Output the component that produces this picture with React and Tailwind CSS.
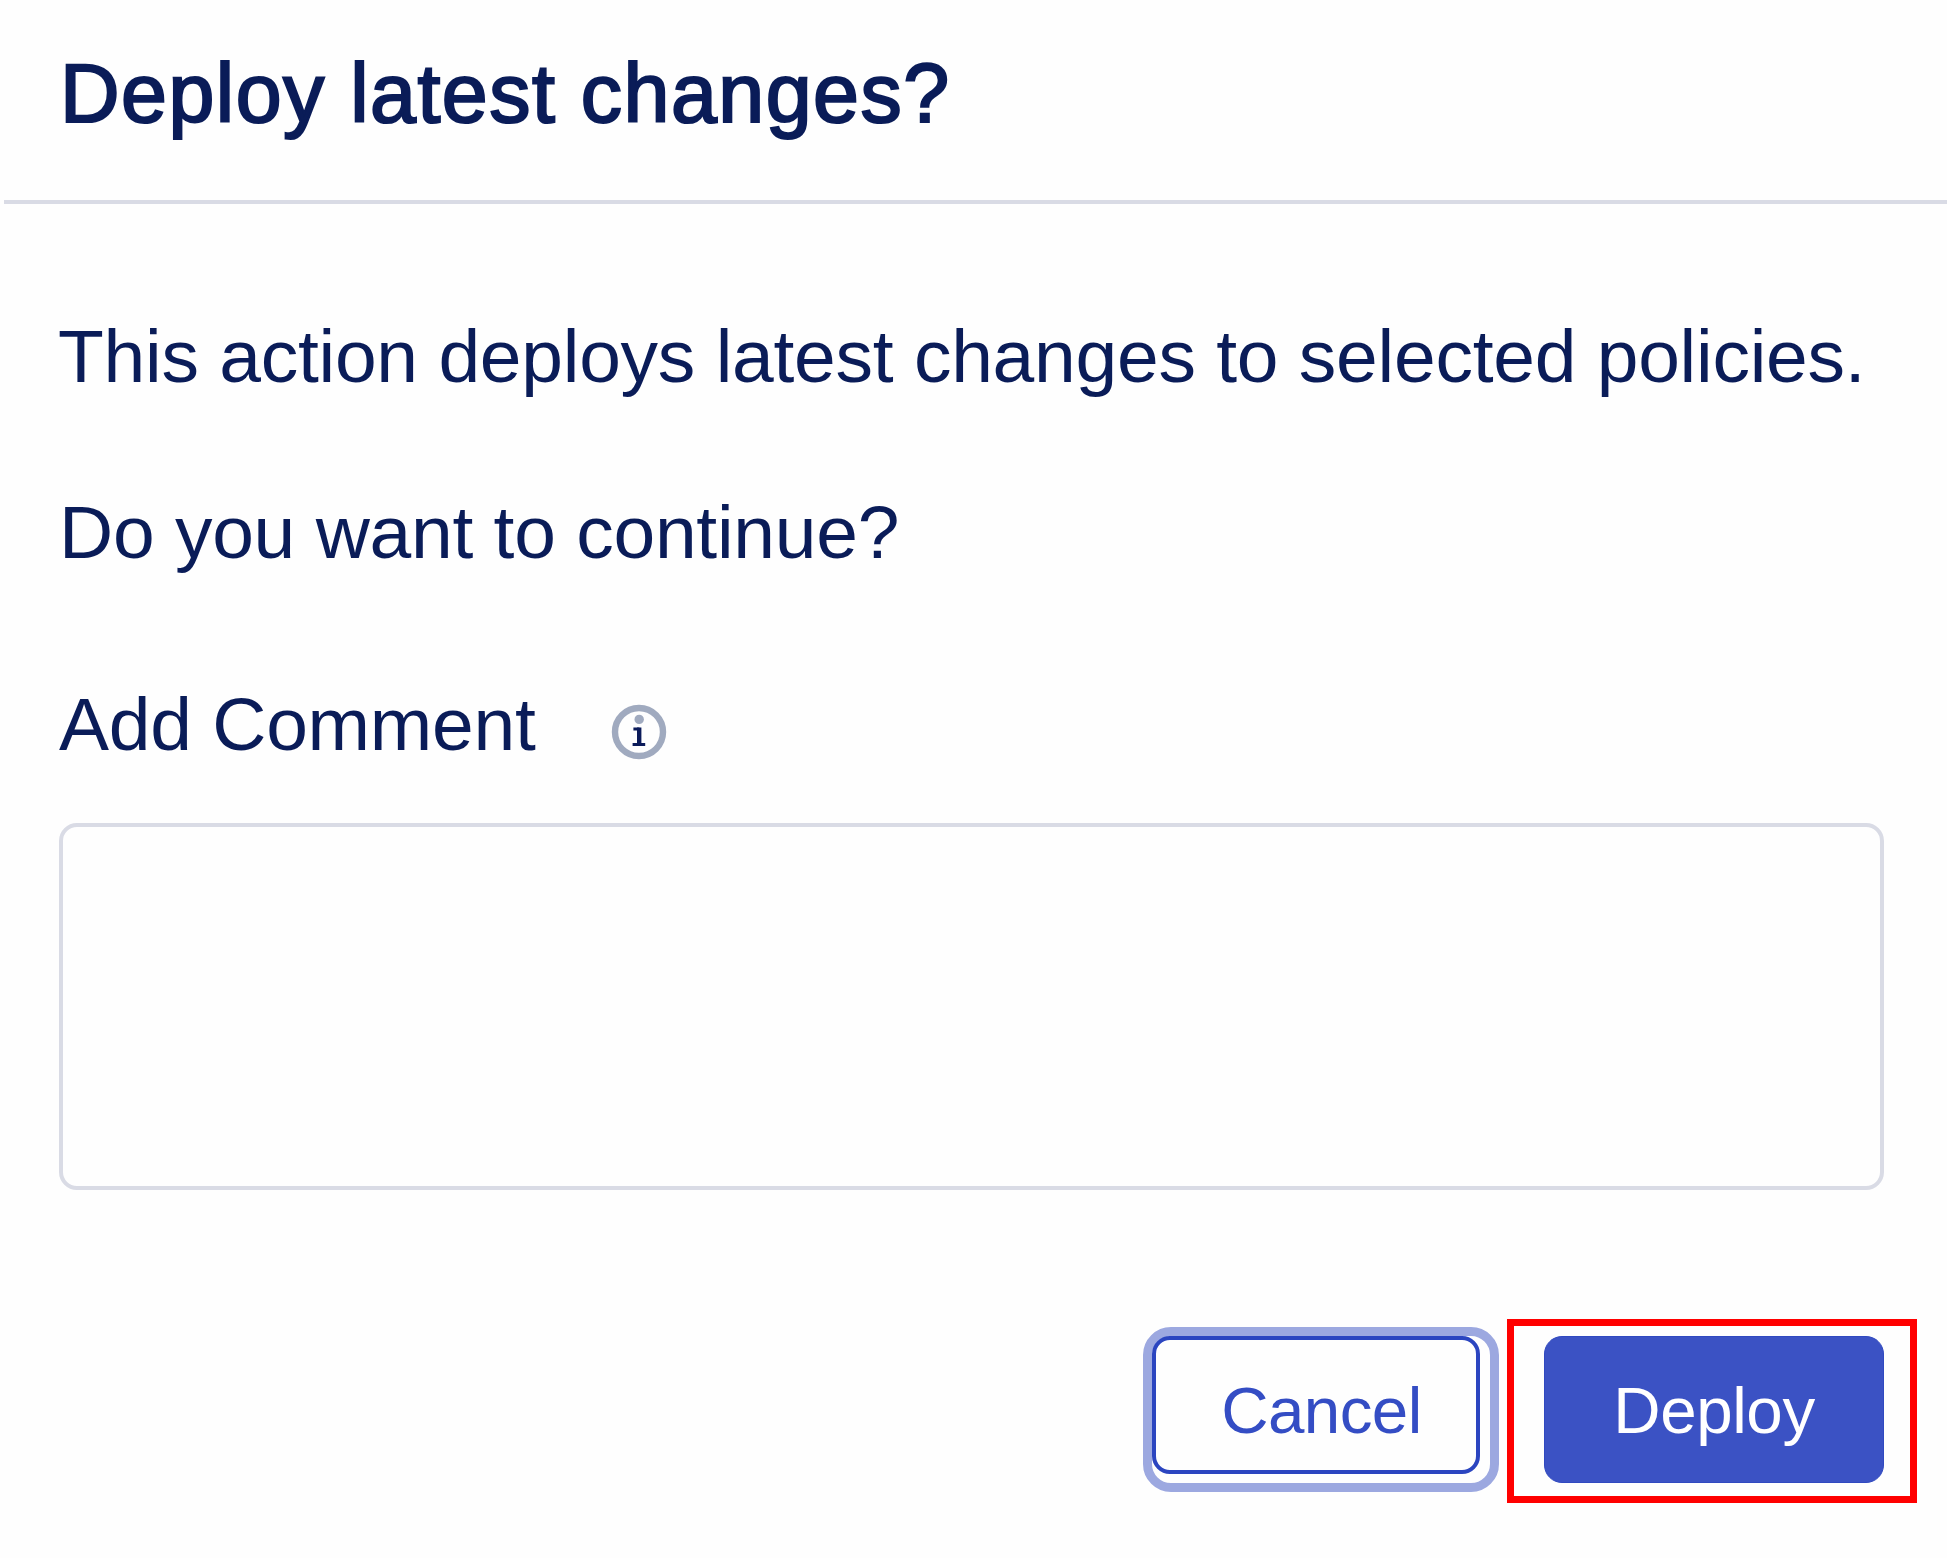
function InfoIcon() {
  return (
    <svg viewBox="0 0 56 56" className="h-14 w-14" fill="none" aria-label="Info">
      <circle cx="28" cy="28" r="24" stroke="#a0aabf" strokeWidth="6.4" />
      <circle cx="28.2" cy="15.4" r="4.7" fill="#a0aabf" />
      <path d="M22.4 25h6M21.6 40.4h12.6" stroke="#0b1b5a" strokeWidth="3" />
      <path d="M28.2 23.5v17" stroke="#0b1b5a" strokeWidth="4.4" />
    </svg>
  );
}

export default function App() {
  return (
    <div
      role="dialog"
      className="h-[1558px] w-[1947px] overflow-hidden bg-[#fefefe] font-['Liberation_Sans',Arial,sans-serif] text-[#0a1c58]"
    >
      <header className="ml-1 h-[204px] border-b-4 border-[#d9dbe5] pt-[43px] pl-14">
        <h1 className="text-[82.5px] leading-[100px] tracking-[1.5px] whitespace-nowrap [-webkit-text-stroke:2.2px_#0a1c58]">
          Deploy latest changes?
        </h1>
      </header>

      <main className="flex flex-col pt-[102px] pr-[63px] pl-[58px] text-[75px] leading-[100px] tracking-[-0.26px] whitespace-nowrap">
        <p>This action deploys latest changes to selected policies.</p>
        <p className="mt-[76px] ml-px">Do you want to continue?</p>
        <div className="mt-[92px] ml-px flex items-center">
          <label htmlFor="comment">Add Comment</label>
          <span className="mt-4 ml-[75px]">
            <InfoIcon />
          </span>
        </div>
        <textarea
          id="comment"
          className="mt-[49px] ml-px h-[367px] w-[1825px] resize-none rounded-[18px] border-4 border-[#d9dbe5] bg-transparent"
        />
      </main>

      <footer className="mt-[129px] flex items-start justify-end pr-[30px] text-[65.5px] leading-[76px]">
        <div className="mt-2 mr-2 h-[165px] w-[356px] rounded-[28px] border-9 border-[#9ca8e0]">
          <button className="flex h-[138px] w-[328px] items-center justify-center rounded-[18px] border-4 border-[#2b45c0] pt-[11px] pl-[11px] tracking-[-0.6px] text-[#344dc4]">
            Cancel
          </button>
        </div>
        <div className="h-[184px] w-[410px] border-7 border-[#ff0000] pt-[10px] pl-[30px]">
          <button className="flex h-[147px] w-[340px] items-center justify-center rounded-[18px] border border-[#3049c0] bg-[#3b52c4] pt-[3px] tracking-[-0.4px] text-white">
            Deploy
          </button>
        </div>
      </footer>
    </div>
  );
}
